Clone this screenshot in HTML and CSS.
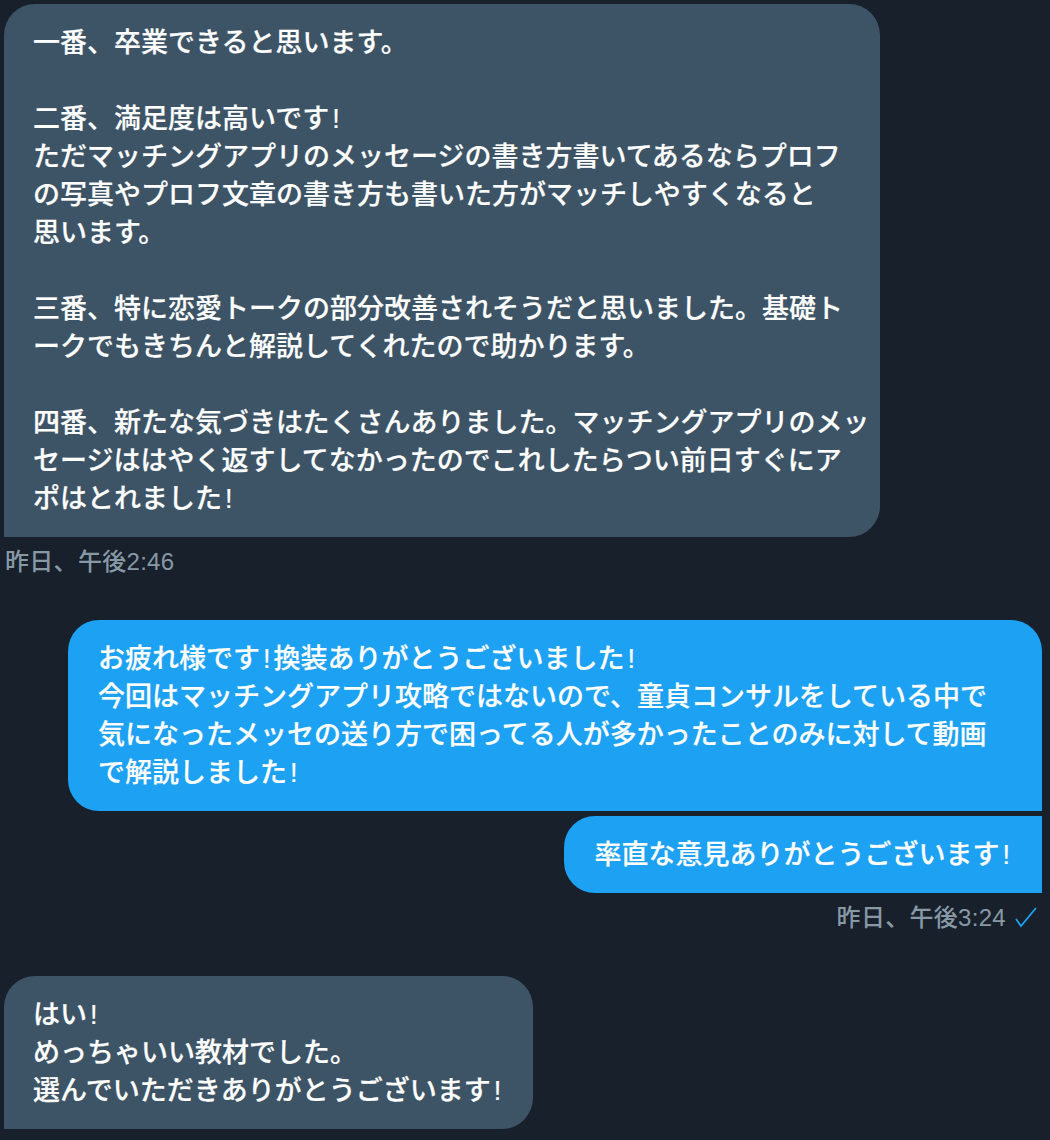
FILE: index.html
```html
<!DOCTYPE html>
<html lang="ja">
<head>
<meta charset="utf-8">
<title>DM</title>
<link rel="stylesheet" href="styles.css">
</head>
<body>
<div class="thread">
  <div class="group recv">
    <div class="bubble in wide">一番、卒業できると思います。<br><br>二番、満足度は高いです<span class="bang">!</span><br>ただマッチングアプリのメッセージの書き方書いてあるならプロフ<br>の写真やプロフ文章の書き方も書いた方がマッチしやすくなると<br>思います。<br><br>三番、特に恋愛トークの部分改善されそうだと思いました。基礎ト<br>ークでもきちんと解説してくれたので助かります。<br><br>四番、新たな気づきはたくさんありました。マッチングアプリのメッ<br>セージははやく返すしてなかったのでこれしたらつい前日すぐにア<br>ポはとれました<span class="bang">!</span></div>
    <div class="meta">昨日、午後2:46</div>
  </div>
  <div class="group sent">
    <div class="bubble out first wide2">お疲れ様です<span class="bang">!</span>換装ありがとうございました<span class="bang">!</span><br>今回はマッチングアプリ攻略ではないので、童貞コンサルをしている中で<br>気になったメッセの送り方で困ってる人が多かったことのみに対して動画<br>で解説しました<span class="bang">!</span></div>
    <div class="bubble out last">率直な意見ありがとうございます<span class="bang">!</span></div>
    <div class="meta">昨日、午後3:24<svg class="check" width="24" height="22" viewBox="0 0 24 22"><polyline points="2,12 7,19 22,1" fill="none" stroke="#1da1f2" stroke-width="1.8"/></svg></div>
  </div>
  <div class="group recv">
    <div class="bubble in">はい<span class="bang">!</span><br>めっちゃいい教材でした。<br>選んでいただきありがとうございます<span class="bang">!</span></div>
  </div>
</div>
</body>
</html>
```
FILE: styles.css
```css
html, body {
  margin: 0;
  padding: 0;
  background: #18202c;
}
.thread {
  display: flex;
  flex-direction: column;
  gap: 44px;
  padding: 4px 8px 0 4px;
  font-family: "Liberation Sans", "Noto Sans CJK JP", sans-serif;
}
.group {
  display: flex;
  flex-direction: column;
  gap: 5px;
}
.recv { align-items: flex-start; }
.sent { align-items: flex-end; }
.bubble {
  color: #ffffff;
  font-size: 27px;
  font-weight: 500;
  line-height: 38px;
  padding: 19.5px 29px;
  white-space: nowrap;
  box-sizing: border-box;
  -webkit-text-stroke: 0.2px #ffffff;
}
.bang {
  margin: 0 3px;
  font-weight: 400;
}
.in {
  background: #3d5466;
  border-radius: 31px 31px 31px 0;
}
.out {
  background: #1da1f2;
  padding-left: 30px;
}
.out.first { border-radius: 31px 31px 0 31px; }
.out.last { border-radius: 31px 0 0 31px; }
.wide { width: 876px; }
.wide2 { width: 974px; }
.meta {
  color: #8899a6;
  font-size: 24px;
  font-weight: 500;
  line-height: 29px;
  margin-top: 5px;
  padding: 0 4px 0 1px;
  display: flex;
  align-items: center;
  gap: 8px;
  letter-spacing: 0.3px;
}
.check { display: block; }
```
